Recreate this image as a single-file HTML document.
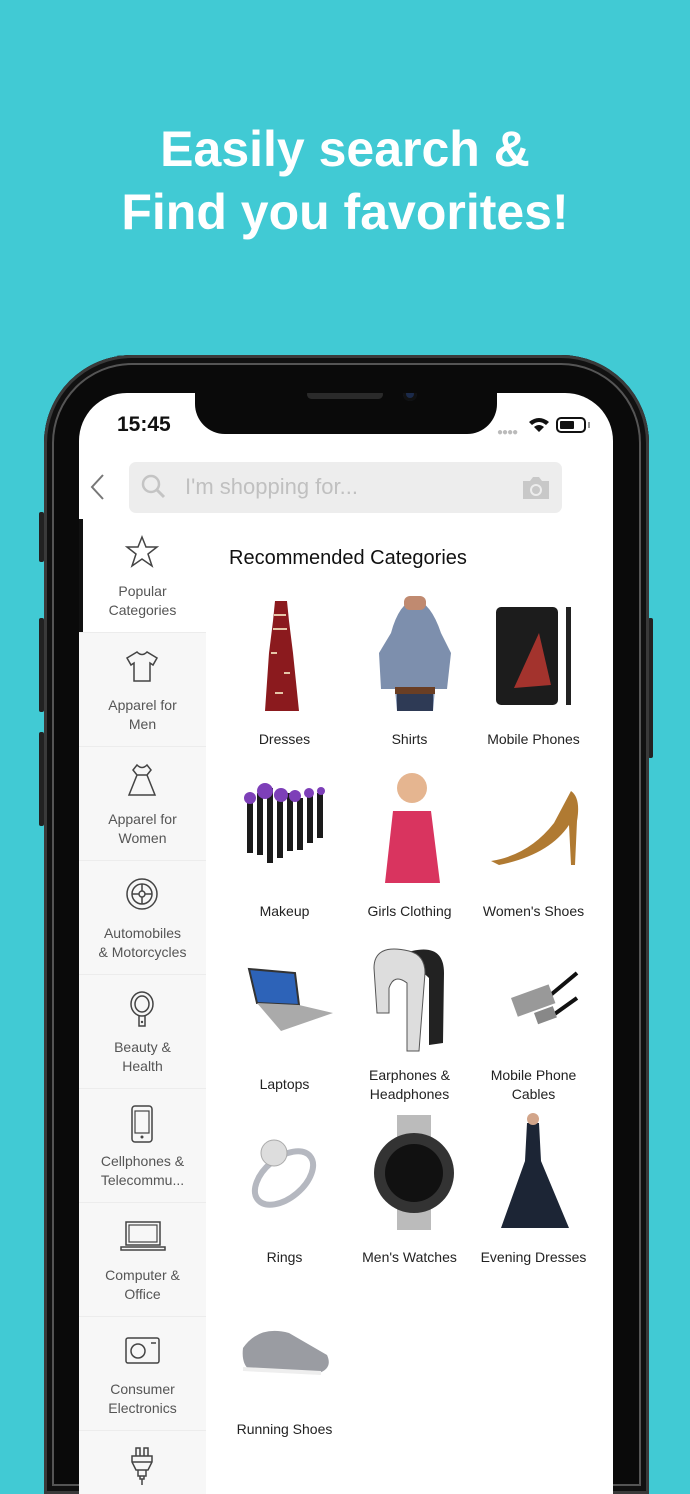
<!DOCTYPE html>
<html><head><meta charset="utf-8">
<style>
*{margin:0;padding:0;box-sizing:border-box}
html,body{width:690px;height:1494px;overflow:hidden}
body{background:#41cad4;position:relative;font-family:"Liberation Sans",sans-serif}
.wrap{position:absolute;left:0;top:0;width:690px;height:1494px;overflow:hidden}
.title{position:absolute;left:0;width:690px;text-align:center;color:#fff;font-weight:bold;font-size:50px;line-height:63px;top:118px}
.phone{position:absolute;left:44px;top:355px;width:605px;height:1139px;background:#0a0a0a;border-radius:88px 88px 0 0;box-shadow:inset 0 0 0 3px #3a3a3a,inset 0 0 0 8px #111,inset 0 0 0 10px #555}
.btn{position:absolute;background:#222;width:5px;border-radius:2px}
.screen{position:absolute;left:79px;top:393px;width:534px;height:1101px;background:#fff;border-radius:48px 48px 0 0;overflow:hidden}
.notch{position:absolute;left:116px;top:-5px;width:302px;height:46px;background:#0a0a0a;border-radius:0 0 30px 30px}
.abs{position:absolute}
.side{position:absolute;left:0;top:126px;width:127px;height:975px;background:#f7f7f7}
.item{position:absolute;left:0;width:127px;height:114px;border-bottom:1px solid #ececec;text-align:center}
.item .lbl{position:absolute;left:0;width:127px;top:63px;font-size:14px;line-height:19px;color:#555}
.item svg{position:absolute;left:45px;top:15px}
.p{position:absolute;width:125px;text-align:center;font-size:14px;line-height:19px;color:#222}
</style></head><body><div class="wrap">
<div class="title">Easily search &amp;<br>Find you favorites!</div>
<div class="btn" style="left:39px;top:512px;height:50px"></div>
<div class="btn" style="left:39px;top:618px;height:94px"></div>
<div class="btn" style="left:39px;top:732px;height:94px"></div>
<div class="btn" style="left:648px;top:618px;height:140px"></div>
<div class="phone"></div>
<div class="screen">
  <div class="notch">
    <div class="abs" style="left:112px;top:2px;width:76px;height:9px;background:#2a2a2a;border-radius:5px"></div>
    <div class="abs" style="left:208px;top:-1px;width:14px;height:14px;background:#1b2a4a;border-radius:50%;box-shadow:inset 0 0 0 3px #111"></div>
  </div>
  <div class="abs" style="left:38px;top:20px;font-size:21px;font-weight:bold;color:#111">15:45</div>
  <div class="abs" style="left:418px;top:34px;font-size:10px;color:#bbb;letter-spacing:-1px">●●●●</div>
  <svg class="abs" style="left:449px;top:24px" width="22" height="16" viewBox="0 0 22 16"><path d="M1 5 Q11 -3 21 5 L18 8 Q11 2 4 8Z M6 10 Q11 6 16 10 L11 15Z" fill="#111"/></svg>
  <div class="abs" style="left:477px;top:24px;width:30px;height:16px;border:2px solid #111;border-radius:5px"><div style="margin:2px;width:14px;height:8px;background:#111;border-radius:1px"></div></div>
  <div class="abs" style="left:509px;top:29px;width:2px;height:6px;background:#999"></div>
  <svg class="abs" style="left:8px;top:80px" width="20" height="28" viewBox="0 0 20 28"><path d="M16 2 L5 14 L16 26" stroke="#777" stroke-width="2" fill="none"/></svg>
  <div class="abs" style="left:50px;top:69px;width:433px;height:51px;background:#ededed;border-radius:7px">
    <svg class="abs" style="left:12px;top:12px" width="26" height="26" viewBox="0 0 26 26"><circle cx="10" cy="10" r="8" stroke="#c4c4c4" stroke-width="2.5" fill="none"/><path d="M16 16 L23 23" stroke="#c4c4c4" stroke-width="3"/></svg>
    <div class="abs" style="left:56px;top:12px;font-size:22px;color:#c0c0c0">I'm shopping for...</div>
    <svg class="abs" style="left:392px;top:13px" width="30" height="26" viewBox="0 0 30 26"><path d="M2 6h7l3-4h6l3 4h7v18H2z" fill="#c8c8c8"/><circle cx="15" cy="15" r="6" fill="#ededed"/><circle cx="15" cy="15" r="4" fill="#c8c8c8"/></svg>
  </div>
  <div class="side">
    <div class="item" style="top:0;background:#fff;border-left:4px solid #111"></div>
    <div class="item" style="top:0"><svg width="36" height="36" viewBox="0 0 36 36"><path d="M18 3 L22 13 L33 13 L24 20 L28 32 L18 25 L8 32 L12 20 L3 13 L14 13Z" stroke="#444" stroke-width="1.5" fill="none"/></svg><div class="lbl">Popular<br>Categories</div></div>
    <div class="item" style="top:114px"><svg width="36" height="36" viewBox="0 0 36 36"><path d="M13 4 L3 10 L7 17 L10 15 L10 33 L26 33 L26 15 L29 17 L33 10 L23 4 Q18 9 13 4Z" stroke="#444" stroke-width="1.5" fill="none"/></svg><div class="lbl">Apparel for<br>Men</div></div>
    <div class="item" style="top:228px"><svg width="36" height="36" viewBox="0 0 36 36"><path d="M13 3 L9 8 L13 13 L5 33 L31 33 L23 13 L27 8 L23 3 Q18 8 13 3Z M13 13 H23" stroke="#444" stroke-width="1.5" fill="none"/></svg><div class="lbl">Apparel for<br>Women</div></div>
    <div class="item" style="top:342px"><svg width="36" height="36" viewBox="0 0 36 36"><circle cx="18" cy="18" r="15" stroke="#444" stroke-width="1.5" fill="none"/><circle cx="18" cy="18" r="10" stroke="#444" stroke-width="1.5" fill="none"/><circle cx="18" cy="18" r="3" stroke="#444" stroke-width="1.5" fill="none"/><path d="M18 8v7M18 21v7M8 18h7M21 18h7" stroke="#444" stroke-width="1.5"/></svg><div class="lbl">Automobiles<br>&amp; Motorcycles</div></div>
    <div class="item" style="top:456px"><svg width="36" height="40" viewBox="0 0 36 40"><ellipse cx="18" cy="14" rx="11" ry="12" stroke="#444" stroke-width="1.5" fill="none"/><ellipse cx="18" cy="14" rx="7" ry="8" stroke="#444" stroke-width="1.5" fill="none"/><path d="M15 26 V36 H21 V26" stroke="#444" stroke-width="1.5" fill="none"/><circle cx="18" cy="32" r="1.2" fill="#444"/></svg><div class="lbl">Beauty &amp;<br>Health</div></div>
    <div class="item" style="top:570px"><svg width="36" height="40" viewBox="0 0 36 40"><rect x="8" y="2" width="20" height="36" rx="3" stroke="#444" stroke-width="1.5" fill="none"/><rect x="11" y="7" width="14" height="22" stroke="#444" stroke-width="1.2" fill="none"/><circle cx="18" cy="33" r="1.5" fill="#444"/></svg><div class="lbl">Cellphones &amp;<br>Telecommu...</div></div>
    <div class="item" style="top:684px"><svg width="46" height="36" viewBox="0 0 46 36" style="left:41px"><rect x="6" y="4" width="34" height="23" stroke="#444" stroke-width="1.5" fill="none"/><rect x="9" y="7" width="28" height="17" stroke="#444" stroke-width="1.2" fill="none"/><path d="M1 29 H45 V32 H1Z" stroke="#444" stroke-width="1.5" fill="none"/></svg><div class="lbl">Computer &amp;<br>Office</div></div>
    <div class="item" style="top:798px"><svg width="36" height="36" viewBox="0 0 36 36"><rect x="2" y="6" width="33" height="25" rx="2" stroke="#444" stroke-width="1.5" fill="none"/><circle cx="14" cy="19" r="7" stroke="#444" stroke-width="1.5" fill="none"/><path d="M27 11h5" stroke="#444" stroke-width="1.5"/></svg><div class="lbl">Consumer<br>Electronics</div></div>
    <div class="item" style="top:912px;border-bottom:none"><svg width="36" height="40" viewBox="0 0 36 40"><path d="M12 2h4v8h-4z M20 2h4v8h-4z M8 10h20v6l-4 8h-12l-4-8z M8 16h20 M14 24v6h8v-6 M16 30v3h4v-3 M18 33v6" stroke="#444" stroke-width="1.5" fill="none"/></svg></div>
  </div>
  <div class="abs" style="left:150px;top:154px;font-size:20px;color:#111">Recommended Categories</div>
  <svg class="abs" style="left:150px;top:200px" width="384" height="820" viewBox="0 0 384 820">
    <path d="M46 8 L44 28 L40 60 L36 118 L70 118 L64 60 L60 28 L58 8Z" fill="#8b1a1e"/>
    <path d="M45 22h12M44 36h14M42 60h6M55 80h6M46 100h8" stroke="#e5c6a8" stroke-width="2"/>
    <path d="M162 40 Q170 10 186 6 Q202 10 212 40 L222 60 L218 96 L206 96 L204 118 L168 118 L166 96 L152 96 L150 60Z" fill="#7d8fad"/>
    <rect x="175" y="3" width="22" height="14" rx="6" fill="#c08a70"/>
    <rect x="166" y="94" width="40" height="7" fill="#6a3e24"/>
    <rect x="168" y="101" width="36" height="17" fill="#2e3a55"/>
    <rect x="267" y="14" width="62" height="98" rx="5" fill="#1c1c1c"/>
    <path d="M285 95 L310 40 L322 92Z" fill="#c53a32" opacity=".8"/>
    <rect x="337" y="14" width="5" height="98" fill="#222"/>
    <g fill="#1a1a1a"><rect x="18" y="205" width="6" height="55"/><rect x="28" y="200" width="6" height="62"/><rect x="38" y="195" width="6" height="75"/><rect x="48" y="205" width="6" height="60"/><rect x="58" y="200" width="6" height="58"/><rect x="68" y="205" width="6" height="52"/><rect x="78" y="200" width="6" height="50"/><rect x="88" y="200" width="6" height="45"/></g>
    <g fill="#7d3fb8"><circle cx="21" cy="205" r="6"/><circle cx="36" cy="198" r="8"/><circle cx="52" cy="202" r="7"/><circle cx="66" cy="203" r="6"/><circle cx="80" cy="200" r="5"/><circle cx="92" cy="198" r="4"/></g>
    <circle cx="183" cy="195" r="15" fill="#e5b590"/>
    <path d="M164 218 L202 218 L211 290 L156 290Z" fill="#d9345f"/>
    <path d="M262 268 Q300 262 325 230 L342 198 Q352 205 348 228 L346 272 L342 272 L340 232 Q320 262 270 272Z" fill="#b07a32"/>
    <path d="M20 376 L66 380 L70 412 L28 410Z" fill="#2d63b8" stroke="#333" stroke-width="2"/>
    <path d="M28 410 L70 412 L104 420 L52 438Z" fill="#aaa"/>
    <path d="M170 362 Q215 345 215 380 L214 450 L200 452 L200 385 Q185 370 170 375Z" fill="#222"/>
    <path d="M145 375 Q145 350 180 358 Q196 362 196 380 L190 458 L178 458 L178 390 Q165 380 160 395 L160 420 L148 420Z" fill="#ddd" stroke="#555"/>
    <path d="M312 410 L348 380 M320 425 L348 405" stroke="#111" stroke-width="4"/>
    <rect x="282" y="405" width="40" height="20" fill="#999" transform="rotate(-20 282 405)"/>
    <rect x="305" y="420" width="20" height="12" fill="#888" transform="rotate(-20 305 420)"/>
    <ellipse cx="55" cy="585" rx="34" ry="20" stroke="#b5b8c0" stroke-width="6" fill="none" transform="rotate(-40 55 585)"/>
    <circle cx="45" cy="560" r="13" fill="#ddd" stroke="#aaa"/>
    <rect x="168" y="522" width="34" height="115" fill="#bbb"/>
    <circle cx="185" cy="580" r="40" fill="#333"/><circle cx="185" cy="580" r="29" fill="#111"/>
    <path d="M298 530 L310 530 L312 568 L340 635 L272 635 L296 568Z" fill="#1c2535"/>
    <circle cx="304" cy="526" r="6" fill="#d2a58a"/>
    <path d="M14 755 Q30 732 60 740 L98 762 Q104 775 90 780 L22 778 Q12 772 14 755Z" fill="#9a9ca2"/>
    <path d="M14 776 L92 780" stroke="#eee" stroke-width="4"/>
  </svg>
  <div class="p" style="left:143px;top:337px">Dresses</div>
  <div class="p" style="left:268px;top:337px">Shirts</div>
  <div class="p" style="left:392px;top:337px">Mobile Phones</div>
  <div class="p" style="left:143px;top:509px">Makeup</div>
  <div class="p" style="left:268px;top:509px">Girls Clothing</div>
  <div class="p" style="left:392px;top:509px">Women's Shoes</div>
  <div class="p" style="left:143px;top:682px">Laptops</div>
  <div class="p" style="left:268px;top:673px">Earphones &amp;<br>Headphones</div>
  <div class="p" style="left:392px;top:673px">Mobile Phone<br>Cables</div>
  <div class="p" style="left:143px;top:855px">Rings</div>
  <div class="p" style="left:268px;top:855px">Men's Watches</div>
  <div class="p" style="left:392px;top:855px">Evening Dresses</div>
  <div class="p" style="left:143px;top:1027px">Running Shoes</div>
</div>
</div></body></html>
